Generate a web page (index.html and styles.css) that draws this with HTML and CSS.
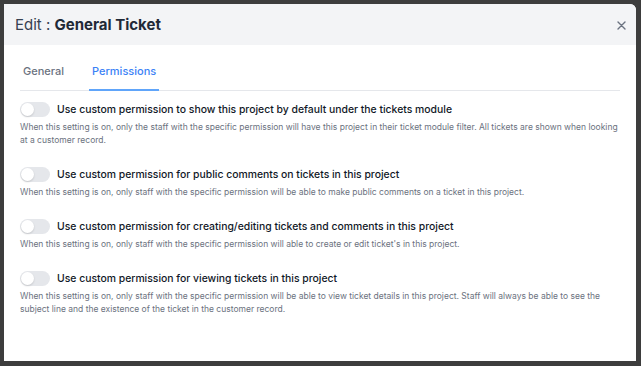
FILE: index.html
```html
<!DOCTYPE html>
<html lang="en">
<head>
    <meta charset="UTF-8">
    <title>Edit : General Ticket</title>
    <link rel="stylesheet" href="styles.css">
</head>
<body>
    <!-- Modal -->
    <div class="modal">
        <div class="modal-header">
            <h2 class="modal-title">Edit : <strong>General Ticket</strong></h2>
            <button class="close-btn" aria-label="Close">
                <svg width="9" height="9" viewBox="0 0 9 9">
                    <path d="M1 1L8 8M8 1L1 8" stroke="#6b7280" stroke-width="1.4" stroke-linecap="round"/>
                </svg>
            </button>
        </div>

        <div class="modal-body">
            <!-- Tabs -->
            <div class="tabs">
                <div class="tab">General</div>
                <div class="tab active">Permissions</div>
            </div>

            <!-- Settings -->
            <div class="setting">
                <div class="setting-row">
                    <span class="toggle"><span class="knob"></span></span>
                    <span class="setting-label">Use custom permission to show this project by default under the tickets module</span>
                </div>
                <p class="setting-desc">When this setting is on, only the staff with the specific permission will have this project in their ticket module filter. All tickets are shown when looking at a customer record.</p>
            </div>

            <div class="setting">
                <div class="setting-row">
                    <span class="toggle"><span class="knob"></span></span>
                    <span class="setting-label">Use custom permission for public comments on tickets in this project</span>
                </div>
                <p class="setting-desc">When this setting is on, only staff with the specific permission will be able to make public comments on a ticket in this project.</p>
            </div>

            <div class="setting">
                <div class="setting-row">
                    <span class="toggle"><span class="knob"></span></span>
                    <span class="setting-label">Use custom permission for creating/editing tickets and comments in this project</span>
                </div>
                <p class="setting-desc">When this setting is on, only staff with the specific permission will able to create or edit ticket's in this project.</p>
            </div>

            <div class="setting">
                <div class="setting-row">
                    <span class="toggle"><span class="knob"></span></span>
                    <span class="setting-label">Use custom permission for viewing tickets in this project</span>
                </div>
                <p class="setting-desc">When this setting is on, only staff with the specific permission will be able to view ticket details in this project. Staff will always be able to see the subject line and the existence of the ticket in the customer record.</p>
            </div>
        </div>
    </div>
</body>
</html>
```

FILE: styles.css
```css
/* Base */
html, body {
    margin: 0;
    padding: 0;
    height: 100%;
}

body {
    background: #3d3d3d;
    font-family: 'Inter', 'Liberation Sans', sans-serif;
    color: #1f2937;
    padding: 4px 5px 5px 4px;
    box-sizing: border-box;
}

/* Modal */
.modal {
    background: #fff;
    height: 100%;
    border-top-right-radius: 6px;
    overflow: hidden;
}

.modal-header {
    background: #f3f4f6;
    height: 41px;
    display: flex;
    align-items: center;
    justify-content: space-between;
    padding: 0 6px 0 11px;
}

.modal-title {
    margin: 0;
    font-size: 15px;
    font-weight: 400;
    color: #374151;
}

.modal-title strong {
    font-weight: 700;
    color: #1f2937;
}

.close-btn {
    background: none;
    border: none;
    padding: 5px 4px 3px;
    display: flex;
    cursor: pointer;
}

/* Body */
.modal-body {
    padding: 0 16px;
}

.tabs {
    display: flex;
    border-bottom: 1px solid #e5e7eb;
    margin-bottom: 11px;
}

.tab {
    font-size: 11px;
    line-height: 14px;
    font-weight: 500;
    color: #6b7280;
    padding: 19px 3px 11px;
    margin-right: 22px;
    border-bottom: 2px solid transparent;
    margin-bottom: -1px;
}

.tab.active {
    color: #3b82f6;
    border-bottom-color: #60a5fa;
}

/* Settings */
.setting {
    margin-bottom: 20px;
}

.setting-row {
    display: flex;
    align-items: center;
    gap: 7px;
}

.toggle {
    width: 30px;
    height: 15px;
    background: #e5e7eb;
    border-radius: 8px;
    position: relative;
    flex-shrink: 0;
}

.knob {
    position: absolute;
    top: 1px;
    left: 1px;
    width: 13px;
    height: 13px;
    border-radius: 50%;
    background: #fff;
    box-shadow: 0 1px 2px rgba(0, 0, 0, 0.15);
}

.setting-label {
    font-size: 10.4px;
    font-weight: 500;
    color: #111827;
}

.setting-desc {
    margin: 4px 0 0;
    font-size: 8.5px;
    line-height: 13px;
    color: #6b7280;
}
```
